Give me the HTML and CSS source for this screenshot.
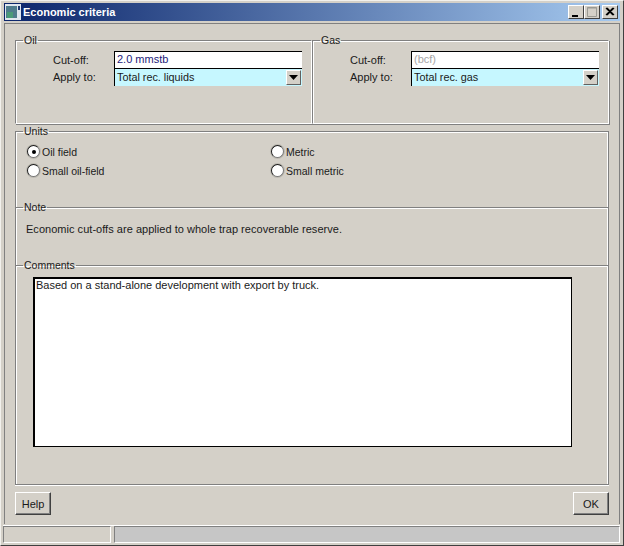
FILE: index.html
```html
<!DOCTYPE html>
<html lang="en">
<head>
<meta charset="utf-8">
<title>Economic criteria</title>
<link rel="stylesheet" href="styles.css">
</head>
<body>
<div class="window">
  <div class="titlebar">
    <svg class="appicon" width="16" height="16" viewBox="0 0 16 16">
      <rect x="0" y="0" width="16" height="16" fill="#dfe6ee"/>
      <rect x="1" y="2" width="11" height="12" fill="#4f7c8c"/>
      <rect x="2" y="8" width="6" height="6" fill="#4a9a78"/>
      <rect x="13" y="2" width="2" height="4" fill="#1f3a70"/>
    </svg>
    <span class="title">Economic criteria</span>
    <div class="wincontrols">
      <div class="wbtn"><svg width="14" height="12" viewBox="0 0 14 12"><rect x="3" y="9" width="6" height="2" fill="#000"/></svg></div>
      <div class="wbtn"><svg width="14" height="12" viewBox="0 0 14 12"><path d="M2.500 1.500h9v9h-9z M2 2h10" fill="none" stroke="#9a9a94"/></svg></div>
      <div class="wbtn close"><svg width="14" height="12" viewBox="0 0 14 12"><path d="M3 2l7 7M4 2l7 7M10 2l-7 7M11 2l-7 7" fill="none" stroke="#000" stroke-width="1.200"/></svg></div>
    </div>
  </div>
  <div class="client">
    <div class="toprow">
      <fieldset class="group half">
        <legend>Oil</legend>
        <div class="form">
          <label>Cut-off:</label>
          <div class="input value">2.0 mmstb</div>
          <label>Apply to:</label>
          <div class="combo"><span>Total rec. liquids</span><div class="arrow"><svg width="9" height="5" viewBox="0 0 9 5"><path d="M0 0h9L4.500 5z" fill="#000"/></svg></div></div>
        </div>
      </fieldset>
      <fieldset class="group half">
        <legend>Gas</legend>
        <div class="form">
          <label>Cut-off:</label>
          <div class="input muted">(bcf)</div>
          <label>Apply to:</label>
          <div class="combo"><span>Total rec. gas</span><div class="arrow"><svg width="9" height="5" viewBox="0 0 9 5"><path d="M0 0h9L4.500 5z" fill="#000"/></svg></div></div>
        </div>
      </fieldset>
    </div>
    <div class="mainbox">
      <fieldset class="group section units">
        <legend>Units</legend>
        <div class="radios">
          <div class="radio"><span class="dot on"></span>Oil field</div>
          <div class="radio"><span class="dot"></span>Metric</div>
          <div class="radio"><span class="dot"></span>Small oil-field</div>
          <div class="radio"><span class="dot"></span>Small metric</div>
        </div>
      </fieldset>
      <fieldset class="group section note">
        <legend>Note</legend>
        <p>Economic cut-offs are applied to whole trap recoverable reserve.</p>
      </fieldset>
      <fieldset class="group section comments">
        <legend>Comments</legend>
        <div class="textarea">Based on a stand-alone development with export by truck.</div>
      </fieldset>
    </div>
    <div class="buttons">
      <div class="btn">Help</div>
      <div class="btn">OK</div>
    </div>
  </div>
  <div class="statusbar">
    <div class="cell first"></div>
    <div class="cell second"></div>
  </div>
</div>
</body>
</html>
```
FILE: styles.css
```css
* { box-sizing: border-box; }
html, body { margin: 0; padding: 0; }
body {
  width: 624px;
  height: 546px;
  overflow: hidden;
  font-family: "Liberation Sans", Arial, sans-serif;
  font-size: 11px;
  color: #1a1a1a;
  background: #d4d0c8;
}
.window {
  width: 624px;
  height: 546px;
  display: flex;
  flex-direction: column;
  background: #d4d0c8;
  border: 1px solid;
  border-color: #f2f1ed #404040 #404040 #f2f1ed;
  padding: 2px 3px 2px 3px;
}
.titlebar {
  height: 18px;
  flex: none;
  display: flex;
  align-items: center;
  padding: 0 2px 0 1px;
  background: linear-gradient(to right, #0a246a, #a6caf0);
}
.appicon { flex: none; margin-right: 3px; }
.title { color: #fff; font-weight: bold; font-size: 11px; margin-left: -1px; }
.wincontrols { margin-left: auto; display: flex; }
.wbtn {
  width: 16px;
  height: 14px;
  display: flex;
  align-items: center;
  justify-content: center;
  background: #d4d0c8;
  border: 1px solid;
  border-color: #fff #404040 #404040 #fff;
}
.close { margin-left: 2px; }
.client {
  flex: 1;
  display: flex;
  flex-direction: column;
  margin-top: 2px;
  padding: 10px 10px 0 10px;
  border-top: 1px solid #808080;
  border-left: 1px solid #808080;
  border-right: 1px solid #808080;
}
.toprow { display: flex; height: 90px; flex: none; }
.group { margin: 0; min-width: 0; }
.half {
  width: 297px;
  height: 90px;
  padding: 0;
  border: 1px solid;
  border-color: #808080 #fff #fff #808080;
  box-shadow: 1px 1px 0 #808080, inset 1px 1px 0 #fff;
}
legend { margin-left: 7px; padding: 0 1px; line-height: 13px; font-size: 10.500px; }
.form {
  display: grid;
  grid-template-columns: 61px 188px;
  grid-template-rows: 17px 18px;
  margin: 4px 0 0 37px;
  align-items: center;
}
.input {
  height: 17px;
  background: #fff;
  border-top: 1px solid #000;
  border-left: 1px solid #000;
  padding: 0 2px;
  line-height: 15px;
}
.value { color: #1d1a7a; }
.muted { color: #a6a6a6; }
.combo {
  height: 18px;
  background: #c6f7ff;
  border-top: 1px solid #000;
  border-left: 1px solid #000;
  padding-left: 2px;
  display: flex;
  align-items: center;
  justify-content: space-between;
}
.combo span { padding-bottom: 2px; font-size: 10.800px; }
.arrow {
  width: 15px;
  height: 15px;
  margin-right: 1px;
  display: flex;
  align-items: center;
  justify-content: center;
  background: #d4d0c8;
  border: 1px solid;
  border-color: #fff #606060 #606060 #fff;
}
.mainbox {
  margin-top: 7px;
  height: 354px;
  flex: none;
  display: flex;
  flex-direction: column;
  border-bottom: 1px solid #808080;
  border-left: 1px solid #808080;
  border-right: 1px solid #808080;
  box-shadow: inset 1px 0 0 #fff, inset -1px 0 0 #fff, 0 1px 0 #fff;
}
.section {
  padding: 0;
  border: 0;
  border-top: 1px solid #808080;
  box-shadow: inset 0 1px 0 #fff;
}
.units { height: 76px; margin-top: -6px; }
.note { height: 58px; }
.comments { flex: 1; }
.radios {
  display: grid;
  grid-template-columns: 244px 1fr;
  grid-template-rows: 19px 19px;
  margin: 4px 0 0 11px;
  font-size: 10.500px;
}
.radio { display: flex; align-items: center; gap: 2px; }
.dot {
  width: 13px;
  height: 13px;
  border-radius: 50%;
  background: #fff;
  border: 1px solid;
  border-color: #1a1a1a #777 #777 #1a1a1a;
  box-shadow: 0 0 0 1px #bdbab2;
  display: flex;
  align-items: center;
  justify-content: center;
}
.dot.on::after {
  content: "";
  width: 4px;
  height: 4px;
  border-radius: 50%;
  background: #000;
}
.note p { margin: 8px 0 0 10px; line-height: 14px; letter-spacing: 0.030px; }
.textarea {
  width: 539px;
  height: 170px;
  margin: 5px 0 0 17px;
  background: #fff;
  border: 2px solid #000;
  border-bottom-width: 1px;
  border-right-width: 1px;
  padding: 0 1px;
  line-height: 13px;
}
.buttons {
  display: flex;
  justify-content: space-between;
  margin-top: 7px;
  width: 594px;
}
.btn {
  width: 36px;
  height: 23px;
  display: flex;
  align-items: center;
  justify-content: center;
  border: 1px solid;
  border-color: #fff #404040 #404040 #fff;
  box-shadow: inset -1px -1px 0 #808080;
}
.statusbar {
  margin: 1px 0 0 -1px;
  height: 18px;
  flex: none;
  display: flex;
  gap: 3px;
  border-top: 1px solid #fff;
}
.cell {
  border: 1px solid;
  border-color: #808080 #fff #fff #808080;
}
.first { width: 108px; }
.second { flex: 1; background: #c6c6c6; }
```
